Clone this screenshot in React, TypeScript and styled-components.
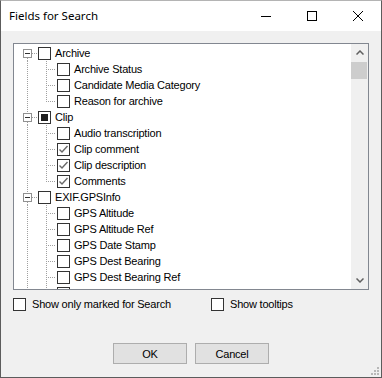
import React from 'react';
import styled, { createGlobalStyle } from 'styled-components';

// == styles =======================================================================================
const GlobalStyle = createGlobalStyle`
  html, body {
    margin: 0;
    padding: 0;
    background: #f0f0f0;
  }
`;

const Window = styled.div`
  position: relative;
  box-sizing: border-box;
  width: 382px;
  height: 378px;
  display: flex;
  flex-direction: column;
  background: #f0f0f0;
  border: 1px solid #5c5c5c;
  border-top-color: #b4b4b4;
  font-family: "Liberation Sans", Arial, sans-serif;
  font-size: 11px;
  letter-spacing: -0.2px;
  color: #000;
  overflow: hidden;
`;

const TitleBar = styled.div`
  display: flex;
  align-items: center;
  height: 30px;
  background: #fff;
  flex-shrink: 0;
`;

const TitleText = styled.div`
  flex: 1;
  padding-left: 8px;
  font-family: "Noto Sans", "Liberation Sans", sans-serif;
  font-size: 11.5px;
  letter-spacing: 0;
  line-height: 30px;
`;

const CaptionButton = styled.div`
  display: flex;
  align-items: center;
  justify-content: center;
  width: 46px;
  height: 30px;
`;

const Body = styled.div`
  display: flex;
  flex-direction: column;
  padding: 12px 12px 0 12px;
`;

const TreeBox = styled.div`
  display: flex;
  box-sizing: border-box;
  height: 247px;
  background: #fff;
  border: 1px solid #828790;
`;

const TreeRows = styled.div`
  flex: 1;
  padding: 1px 0 0 4px;
  overflow: hidden;
`;

const Row = styled.div`
  display: flex;
  align-items: flex-start;
  height: 16px;
  white-space: nowrap;
`;

const Connector = styled.svg`
  display: block;
  flex-shrink: 0;
  width: 19px;
  height: 16px;
`;

const Box = styled.span`
  display: flex;
  align-items: center;
  justify-content: center;
  box-sizing: border-box;
  flex-shrink: 0;
  width: 13px;
  height: 13px;
  margin: 2px 0 0 1px;
  background: #fff;
  border: 1px solid #333;
`;

const Fill = styled.span`
  width: 7px;
  height: 7px;
  background: #1e1e1e;
`;

const Label = styled.span`
  margin-left: 4px;
  line-height: 17px;
`;

const ScrollBar = styled.div`
  display: flex;
  flex-direction: column;
  width: 17px;
  background: #f0f0f0;
`;

const ScrollArrow = styled.div`
  display: flex;
  align-items: center;
  justify-content: center;
  height: 17px;
`;

const ScrollThumb = styled.div`
  height: 17px;
  margin: 1px 1px 0 0;
  background: #cdcdcd;
`;

const ScrollTrack = styled.div`
  flex: 1;
`;

const Options = styled.div`
  display: flex;
  margin-top: 8px;
  height: 13px;
`;

const Option = styled.label<{ $width?: number }>`
  display: flex;
  align-items: center;
  width: ${ ( p ) => ( p.$width ? `${ p.$width }px` : 'auto' ) };
`;

const OptionBox = styled.span`
  box-sizing: border-box;
  width: 13px;
  height: 13px;
  background: #fff;
  border: 1px solid #333;
`;

const OptionText = styled.span`
  margin-left: 6px;
  line-height: 13px;
`;

const Buttons = styled.div`
  display: flex;
  justify-content: center;
  gap: 8px;
  margin-top: 32px;
`;

const Button = styled.div`
  display: flex;
  align-items: center;
  justify-content: center;
  box-sizing: border-box;
  width: 74px;
  height: 21px;
  background: #e1e1e1;
  border: 1px solid #adadad;
`;

const Grip = styled.svg`
  position: absolute;
  right: 1px;
  bottom: 1px;
  width: 10px;
  height: 10px;
`;

// == data =========================================================================================
type Check = 'off' | 'on' | 'mixed';

interface Node {
  name: string;
  check: Check;
  children?: { name: string; check: Check }[];
}

const tree: Node[] = [
  {
    name: 'Archive',
    check: 'off',
    children: [
      { name: 'Archive Status', check: 'off' },
      { name: 'Candidate Media Category', check: 'off' },
      { name: 'Reason for archive', check: 'off' },
    ],
  },
  {
    name: 'Clip',
    check: 'mixed',
    children: [
      { name: 'Audio transcription', check: 'off' },
      { name: 'Clip comment', check: 'on' },
      { name: 'Clip description', check: 'on' },
      { name: 'Comments', check: 'on' },
    ],
  },
  {
    name: 'EXIF.GPSInfo',
    check: 'off',
    children: [
      { name: 'GPS Altitude', check: 'off' },
      { name: 'GPS Altitude Ref', check: 'off' },
      { name: 'GPS Date Stamp', check: 'off' },
      { name: 'GPS Dest Bearing', check: 'off' },
      { name: 'GPS Dest Bearing Ref', check: 'off' },
      { name: 'GPS Dest Distance', check: 'off' },
    ],
  },
];

const DOT = '#a0a0a0';

// == element ======================================================================================
const Lines = ( { top, bottom, horiz = true, expander = false }: {
  top: boolean;
  bottom: boolean;
  horiz?: boolean;
  expander?: boolean;
} ): JSX.Element => (
  <Connector viewBox="0 0 19 16" shapeRendering="crispEdges">
    { expander ? (
      <>
        { top && <line x1="9.5" y1="0" x2="9.5" y2="4" stroke={ DOT } strokeDasharray="1 1" /> }
        { bottom && <line x1="9.5" y1="13" x2="9.5" y2="16" stroke={ DOT } strokeDasharray="1 1" /> }
        <line x1="14" y1="8.5" x2="19" y2="8.5" stroke={ DOT } strokeDasharray="1 1" />
        <rect x="5.5" y="4.5" width="8" height="8" fill="#fff" stroke="#919191" />
        <line x1="7" y1="8.5" x2="12" y2="8.5" stroke="#333" />
      </>
    ) : (
      <>
        { top && <line x1="9.5" y1="0" x2="9.5" y2={ bottom ? 16 : 9 } stroke={ DOT } strokeDasharray="1 1" /> }
        { horiz && <line x1="11" y1="8.5" x2="19" y2="8.5" stroke={ DOT } strokeDasharray="1 1" /> }
      </>
    ) }
  </Connector>
);

const CheckBox = ( { check }: { check: Check } ): JSX.Element => (
  <Box>
    { check === 'mixed' && <Fill /> }
    { check === 'on' && (
      <svg width="11" height="11" viewBox="0 0 11 11">
        <path d="M1.5 5.5 L4 8 L9.5 2" fill="none" stroke="#6a6a6a" strokeWidth="1.4" />
      </svg>
    ) }
  </Box>
);

const App = (): JSX.Element => {
  const rows: JSX.Element[] = [];
  tree.forEach( ( node, i ) => {
    rows.push(
      <Row key={ node.name }>
        <Lines expander top={ i > 0 } bottom />
        <CheckBox check={ node.check } />
        <Label>{ node.name }</Label>
      </Row>
    );
    ( node.children ?? [] ).forEach( ( child, j, list ) => {
      rows.push(
        <Row key={ `${ node.name }/${ child.name }` }>
          <Lines top bottom horiz={ false } />
          <Lines top bottom={ j < list.length - 1 } />
          <CheckBox check={ child.check } />
          <Label>{ child.name }</Label>
        </Row>
      );
    } );
  } );

  return (
    <>
      <GlobalStyle />
      <Window>
        <TitleBar>
          <TitleText>Fields for Search</TitleText>
          <CaptionButton>
            <svg width="10" height="10" viewBox="0 0 10 10" shapeRendering="crispEdges">
              <line x1="0" y1="5.5" x2="10" y2="5.5" stroke="#000" />
            </svg>
          </CaptionButton>
          <CaptionButton>
            <svg width="10" height="10" viewBox="0 0 10 10" shapeRendering="crispEdges">
              <rect x="0.5" y="0.5" width="9" height="9" fill="none" stroke="#000" />
            </svg>
          </CaptionButton>
          <CaptionButton>
            <svg width="10" height="10" viewBox="0 0 10 10">
              <path d="M0 0 L10 10 M10 0 L0 10" stroke="#000" strokeWidth="1" />
            </svg>
          </CaptionButton>
        </TitleBar>
        <Body>
          <TreeBox>
            <TreeRows>{ rows }</TreeRows>
            <ScrollBar>
              <ScrollArrow>
                <svg width="8" height="5" viewBox="0 0 8 5">
                  <path d="M0.5 4.5 L4 1 L7.5 4.5" fill="none" stroke="#606060" strokeWidth="1.5" />
                </svg>
              </ScrollArrow>
              <ScrollThumb />
              <ScrollTrack />
              <ScrollArrow>
                <svg width="8" height="5" viewBox="0 0 8 5">
                  <path d="M0.5 0.5 L4 4 L7.5 0.5" fill="none" stroke="#606060" strokeWidth="1.5" />
                </svg>
              </ScrollArrow>
            </ScrollBar>
          </TreeBox>
          <Options>
            <Option $width={ 198 }>
              <OptionBox />
              <OptionText>Show only marked for Search</OptionText>
            </Option>
            <Option>
              <OptionBox />
              <OptionText>Show tooltips</OptionText>
            </Option>
          </Options>
          <Buttons>
            <Button>OK</Button>
            <Button>Cancel</Button>
          </Buttons>
        </Body>
        <Grip viewBox="0 0 10 10">
          <rect x="7" y="1" width="2" height="2" fill="#b8b8b8" />
          <rect x="4" y="4" width="2" height="2" fill="#b8b8b8" />
          <rect x="7" y="4" width="2" height="2" fill="#b8b8b8" />
          <rect x="1" y="7" width="2" height="2" fill="#b8b8b8" />
          <rect x="4" y="7" width="2" height="2" fill="#b8b8b8" />
          <rect x="7" y="7" width="2" height="2" fill="#b8b8b8" />
        </Grip>
      </Window>
    </>
  );
};

export default App;
